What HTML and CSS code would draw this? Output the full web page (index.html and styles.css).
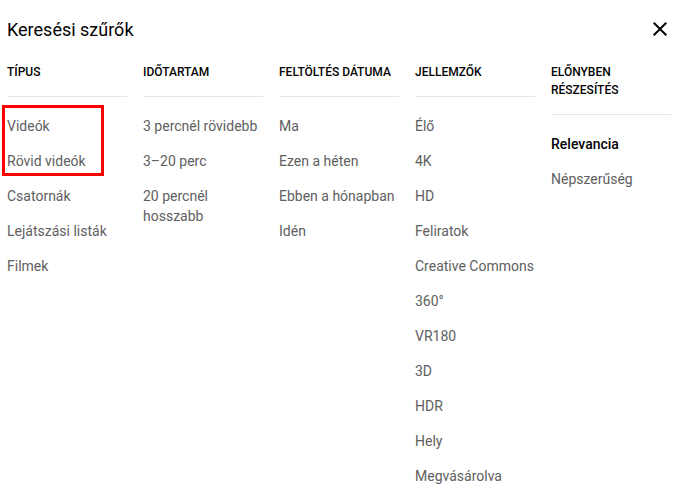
FILE: index.html
```html
<!DOCTYPE html>
<html lang="hu">
<head>
<meta charset="utf-8">
<title>Keresési szűrők</title>
<link rel="stylesheet" href="styles.css">
</head>
<body>
<div class="dialog">
  <div class="title-row">
    <h1 class="title">Keresési szűrők</h1>
    <button class="close" aria-label="Bezárás">
      <svg viewBox="0 0 24 24" width="24" height="24"><path d="M19 6.41L17.59 5 12 10.59 6.41 5 5 6.41 10.59 12 5 17.59 6.41 19 12 13.41 17.59 19 19 17.59 13.41 12z" fill="#030303"/></svg>
    </button>
  </div>
  <div class="groups">
    <div class="group">
      <div class="group-head">Típus</div>
      <ul class="items">
        <li>Videók</li>
        <li>Rövid videók</li>
        <li>Csatornák</li>
        <li>Lejátszási listák</li>
        <li>Filmek</li>
      </ul>
    </div>
    <div class="group">
      <div class="group-head">Időtartam</div>
      <ul class="items">
        <li>3 percnél rövidebb</li>
        <li>3–20 perc</li>
        <li>20 percnél hosszabb</li>
      </ul>
    </div>
    <div class="group">
      <div class="group-head">Feltöltés dátuma</div>
      <ul class="items">
        <li>Ma</li>
        <li>Ezen a héten</li>
        <li>Ebben a hónapban</li>
        <li>Idén</li>
      </ul>
    </div>
    <div class="group">
      <div class="group-head">Jellemzők</div>
      <ul class="items">
        <li>Élő</li>
        <li>4K</li>
        <li>HD</li>
        <li>Feliratok</li>
        <li>Creative Commons</li>
        <li>360°</li>
        <li>VR180</li>
        <li>3D</li>
        <li>HDR</li>
        <li>Hely</li>
        <li>Megvásárolva</li>
      </ul>
    </div>
    <div class="group">
      <div class="group-head">Előnyben részesítés</div>
      <ul class="items">
        <li class="selected">Relevancia</li>
        <li>Népszerűség</li>
      </ul>
    </div>
  </div>
  <div class="highlight"></div>
</div>
</body>
</html>
```

FILE: styles.css
```css
* { box-sizing: border-box; }
html, body {
  margin: 0;
  padding: 0;
  background: #ffffff;
}
body {
  font-family: Roboto, "Liberation Sans", Arial, sans-serif;
  color: #030303;
}
.dialog {
  position: relative;
  padding: 0 7px 0 7px;
}
.title-row {
  display: flex;
  align-items: center;
  justify-content: space-between;
  height: 60px;
}
.title {
  margin: 0;
  font-size: 18px;
  font-weight: 400;
  line-height: 24px;
  color: #030303;
}
.close {
  border: 0;
  background: none;
  padding: 0;
  width: 24px;
  height: 24px;
  margin-right: 0.5px;
  margin-top: -2px;
  display: flex;
}
.groups {
  display: flex;
  gap: 16px;
  padding-top: 3px;
}
.group {
  width: 120px;
  flex: 0 0 120px;
}
.group-head {
  font-size: 12px;
  font-weight: 500;
  line-height: 18px;
  text-transform: uppercase;
  color: #030303;
  padding-bottom: 15px;
  border-bottom: 1px solid #e5e5e5;
}
.items {
  list-style: none;
  margin: 0;
  padding: 19px 0 0 0;
}
.items li {
  font-size: 14px;
  line-height: 20px;
  color: #606060;
  padding-bottom: 15px;
}
.items li.selected {
  color: #030303;
  font-weight: 500;
}
.highlight {
  position: absolute;
  left: 2px;
  top: 105px;
  width: 102px;
  height: 71px;
  border: 3px solid #ff0000;
  pointer-events: none;
}
```
